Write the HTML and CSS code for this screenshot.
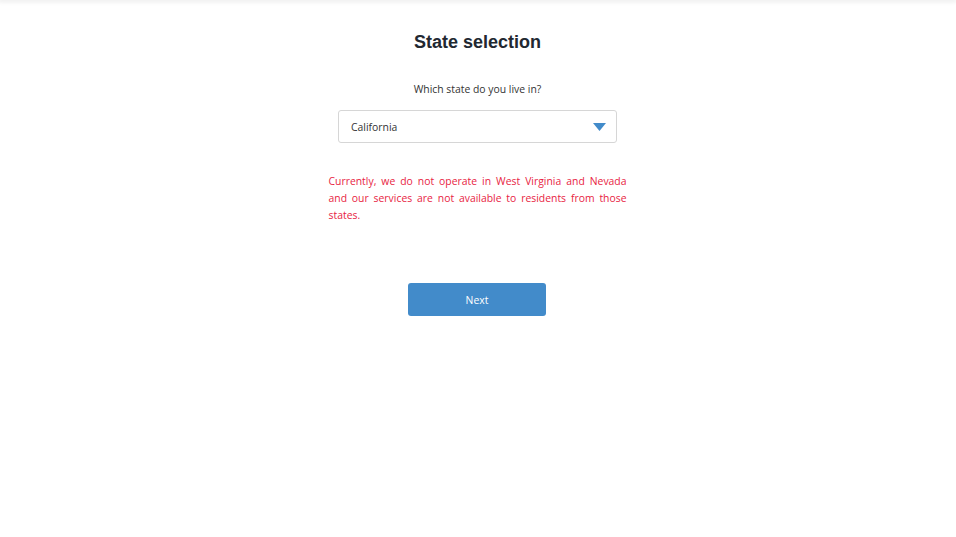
FILE: index.html
```html
<!DOCTYPE html>
<html lang="en">
<head>
    <meta charset="UTF-8">
    <title>State selection</title>
    <link rel="stylesheet" href="styles.css">
</head>
<body>
    <div class="topbar"></div>

    <div class="container">
        <h2>State selection</h2>

        <div class="question">Which state do you live in?</div>

        <div class="select">
            <span>California</span>
            <svg class="caret" width="13" height="8" viewBox="0 0 13 8"><polygon points="0,0 13,0 6.5,8" fill="#428bca"/></svg>
        </div>

        <p class="warning">Currently, we do not operate in West Virginia and Nevada and our services are not available to residents from those states.</p>

        <button class="next-btn">Next</button>
    </div>
</body>
</html>
```

FILE: styles.css
```css
body {
    font-family: 'Open Sans', sans-serif;
    background-color: #ffffff;
    margin: 0;
    padding: 0 1px 0 0;
}

.topbar {
    height: 0;
    box-shadow: 0 0 4px 2px rgba(0, 0, 0, 0.08);
}

.container {
    width: 298px;
    margin: 0 auto;
    padding-top: 31px;
    display: flex;
    flex-direction: column;
    align-items: center;
}

h2 {
    margin: 0;
    font-family: 'Liberation Sans', Arial, sans-serif;
    font-size: 18px;
    font-weight: bold;
    color: #222831;
    line-height: 22px;
}

.question {
    margin-top: 28px;
    font-size: 10.4px;
    color: #333;
    line-height: 16px;
}

.select {
    margin-top: 13px;
    width: 279px;
    height: 33px;
    border: 1px solid #d6d6d6;
    border-radius: 3px;
    display: flex;
    align-items: center;
    justify-content: space-between;
    padding: 0 10px 0 12px;
    box-sizing: border-box;
    font-size: 10.4px;
    color: #333;
}

.caret {
    display: block;
}

.warning {
    margin: 30px 0 0;
    width: 298px;
    font-size: 10.4px;
    line-height: 17px;
    color: #e8233f;
    text-align: justify;
}

.next-btn {
    margin: 59px 1px 0 0;
    width: 138px;
    height: 33px;
    border: none;
    border-radius: 3px;
    background-color: #428bca;
    color: #ffffff;
    font-family: 'Open Sans', sans-serif;
    font-size: 10.4px;
    cursor: pointer;
}
```
